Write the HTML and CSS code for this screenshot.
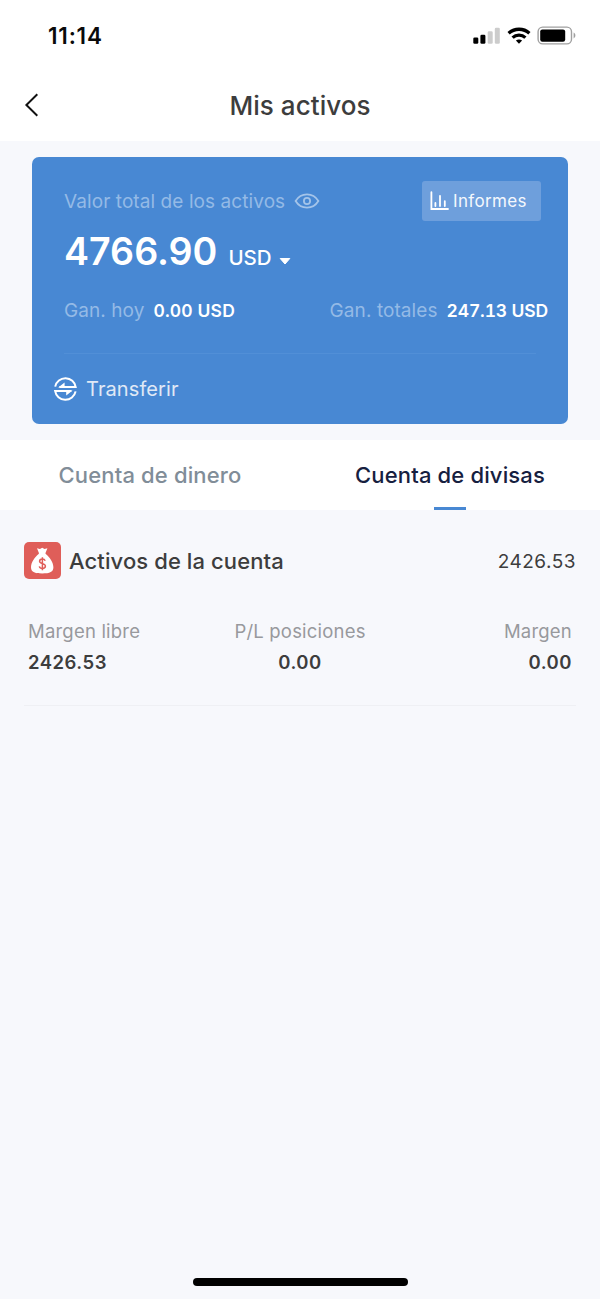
FILE: index.html
```html
<!DOCTYPE html>
<html lang="es">
<head>
<meta charset="utf-8">
<title>Mis activos</title>
<link rel="stylesheet" href="styles.css">
</head>
<body>
<div class="screen">
  <header class="top">
    <div class="status">
      <span class="time">11:14</span>
      <div class="indicators">
        <svg class="signal" width="28" height="18" viewBox="0 0 28 18"><rect x="0.3" y="10.5" width="5" height="6.3" rx="1.3"/><rect x="7.4" y="7.8" width="5" height="9" rx="1.3"/><rect class="off" x="14.7" y="4.2" width="5" height="12.6" rx="1.3"/><rect class="off" x="21.8" y="0.8" width="5" height="16" rx="1.3"/></svg>
        <svg class="wifi" width="24" height="18" viewBox="0 0 24 18"><path d="M1.6 6.2C7.4 0.9 16.6 0.9 22.4 6.2M5.6 10.6C9.2 7.3 14.8 7.3 18.4 10.6" fill="none" stroke="#000" stroke-width="3.3"/><path d="M8.9 13.6C10.6 12.1 13.4 12.1 15.1 13.6L12 16.8Z"/></svg>
        <svg class="battery" width="40" height="20" viewBox="0 0 40 20"><rect x="1.1" y="1.1" width="33.4" height="16.8" rx="4.6" fill="none" stroke="#a0a0a0" stroke-width="1.4"/><rect x="3.2" y="3.4" width="25" height="12.3" rx="2.2"/><path d="M36.6 6.6C39 7.6 39 11.4 36.6 12.4Z" fill="#a0a0a0"/></svg>
      </div>
    </div>
    <div class="bar">
      <svg class="back" width="16" height="26" viewBox="0 0 16 26"><path d="M13.3 2.2L2.4 13L13.3 23.8" fill="none" stroke="#111" stroke-width="2"/></svg>
      <h1 class="title">Mis activos</h1>
    </div>
  </header>

  <section class="hero">
    <div class="card">
      <div class="line-total">
        <span class="faint">Valor total de los activos</span>
        <svg class="eye" width="26" height="16" viewBox="0 0 26 16" fill="none" stroke="#a4c4e9" stroke-width="1.8"><path d="M1.6 8C7 -0.8 19 -0.8 24.4 8C19 16.8 7 16.8 1.6 8Z"/><circle cx="13" cy="8" r="3.1"/></svg>
        <button class="reports"><svg width="19" height="20" viewBox="0 0 19 20" fill="none" stroke="#fff" stroke-width="1.8" stroke-linecap="round"><path d="M1.4 1.2V18H18"/><path d="M5.4 12V15M10 4.8V15M14.8 10.2V15"/></svg><span>Informes</span></button>
      </div>
      <div class="amount"><span class="value">4766.90</span><span class="currency">USD</span><svg class="caret" width="12" height="7" viewBox="0 0 12 7"><path d="M1.2 0.5H10.8L6 6Z" fill="#fff" stroke="#fff" stroke-linejoin="round"/></svg></div>
      <div class="gains">
        <span class="faint">Gan. hoy</span><span class="gain">0.00 USD</span>
        <span class="faint total">Gan. totales</span><span class="gain gain-total">247.13 USD</span>
      </div>
      <div class="transfer">
        <svg width="24" height="24" viewBox="0 0 24 24"><path d="M2.2 9.6A10.4 10.4 0 0 1 22.7 10.1H6.4M22.6 14.4A10.4 10.4 0 0 1 2.1 13.9H18.4" fill="none" stroke="#fff" stroke-width="2"/><path d="M5.2 10.6L11.6 5.6V10.6ZM19.6 13.4L13.2 18.4V13.4Z" fill="#fff"/></svg>
        <span>Transferir</span>
      </div>
    </div>
  </section>

  <nav class="tabs">
    <a class="tab">Cuenta de dinero</a>
    <a class="tab active">Cuenta de divisas</a>
  </nav>

  <main class="account">
    <div class="account-head">
      <svg class="bag" width="37" height="37" viewBox="0 0 37 37"><rect width="37" height="37" rx="5" fill="#df5e59"/><path d="M13 6.2L16 7L18.2 5.8L20.5 7L23.4 6.2L21.4 11.2L21.8 12C25.6 15.2 29.4 20.5 29.4 25.2C29.4 29.8 26 31.4 18.2 31.4C10.4 31.4 7 29.8 7 25.2C7 20.5 10.8 15.2 14.6 12L15 11.2Z" fill="#fff"/><path d="M21.2 18.8C20.7 17.6 19.8 17 18.4 17C16.6 17 15.6 17.9 15.6 19.3C15.6 22.5 21.4 20.7 21.4 24.1C21.4 25.6 20.3 26.5 18.4 26.5C16.6 26.5 15.7 25.8 15.3 24.4M18.4 15.2V28.2" fill="none" stroke="#df5e59" stroke-width="1.5"/></svg>
      <h2>Activos de la cuenta</h2>
      <span class="balance">2426.53</span>
    </div>
    <dl class="stats">
      <div><dt>Margen libre</dt><dd>2426.53</dd></div>
      <div><dt>P/L posiciones</dt><dd>0.00</dd></div>
      <div><dt>Margen</dt><dd>0.00</dd></div>
    </dl>
  </main>
  <div class="home"></div>
</div>
</body>
</html>
```
FILE: styles.css
```css
* { box-sizing: border-box; margin: 0; padding: 0; }
body { font-family: Inter, "Liberation Sans", sans-serif; color: #3d3d3d; background: #f7f8fc; }
.screen { width: 600px; height: 1299px; display: flex; flex-direction: column; background: #f7f8fc; overflow: hidden; }
.screen span, .screen h1, .screen h2, dt, dd { white-space: nowrap; }
.top { height: 141px; background: #fff; }
.status { height: 72px; padding: 0 23px 0 48px; display: flex; justify-content: space-between; align-items: center; }
.time { font-size: 22.5px; font-weight: 600; letter-spacing: .8px; color: #0a0a0a; padding-bottom: 2px; }
.indicators { display: flex; align-items: center; gap: 6px; }
.signal .off { fill: #ccc; }
.bar { height: 67px; padding: 0 24px; display: grid; grid-template-columns: 16px 1fr 16px; align-items: center; }
.back { margin-bottom: 2px; }
.title { font-size: 26px; font-weight: 550; letter-spacing: .05px; text-align: center; }

.hero { height: 299px; padding: 16px 32px; }
.card { height: 267px; border-radius: 7px; background: #4888d3; padding: 24px 20px 0 32px; color: #fff; }
.line-total { height: 40px; display: flex; align-items: center; padding-right: 7px; }
.faint { font-size: 19px; color: #94bae6; letter-spacing: .08px; }
.eye { margin-left: 9px; }
.reports { margin-left: auto; width: 119px; height: 40px; border: 0; border-radius: 3px; background: #6e9fdc; color: #f4f8fd; font: 17px Inter, sans-serif; letter-spacing: .35px; display: flex; align-items: center; gap: 4px; padding-left: 8px; }
.amount { height: 59px; display: flex; align-items: baseline; }
.value { font-size: 37.6px; font-weight: 600; line-height: 62px; }
.currency { font-size: 20.5px; font-weight: 500; margin-left: 11px; }
.caret { margin-left: 7px; }
.gains { height: 74px; padding-bottom: 13px; display: flex; align-items: center; background: linear-gradient(#518fd7, #518fd7) left bottom / 472px 1px no-repeat; }
.gain { font-size: 17.5px; font-weight: 600; letter-spacing: .15px; margin-left: 9px; font-variant-numeric: tabular-nums; }
.gain-total { letter-spacing: -.15px; }
.total { margin-left: auto; }
.transfer { height: 70px; display: flex; align-items: center; gap: 9px; margin-left: -11px; font-size: 20px; letter-spacing: .1px; color: #e0e9f6; }

.tabs { height: 70px; display: grid; grid-template-columns: 1fr 1fr; background: #fff; }
.tab { display: flex; flex-direction: column; align-items: center; padding-top: 4px; font-size: 22px; font-weight: 550; letter-spacing: .15px; line-height: 63px; color: #818d98; }
.active { color: #16203f; }
.active::after { content: ""; width: 32px; height: 3px; background: #4888d3; }

.account { margin: 0 24px; padding-top: 32px; height: 196px; border-bottom: 1px solid #eff0f4; }
.account-head { display: flex; align-items: center; gap: 8px; height: 37px; }
.account-head h2 { font-size: 22px; font-weight: 550; letter-spacing: .1px; }
.balance { margin-left: auto; padding-top: 1px; font-size: 19px; letter-spacing: .5px; }
.stats { margin-top: 37px; padding: 0 4px; display: grid; grid-template-columns: 1fr 1fr 1fr; font-size: 18.5px; letter-spacing: .2px; line-height: 31px; }
.stats div:nth-child(2) { text-align: center; }
.stats div:nth-child(3) { text-align: right; }
dt { color: #98999d; }
dd { font-weight: 600; letter-spacing: .5px; }
.home { width: 215px; height: 8px; border-radius: 4px; background: #000; margin: auto auto 13px; }
```
